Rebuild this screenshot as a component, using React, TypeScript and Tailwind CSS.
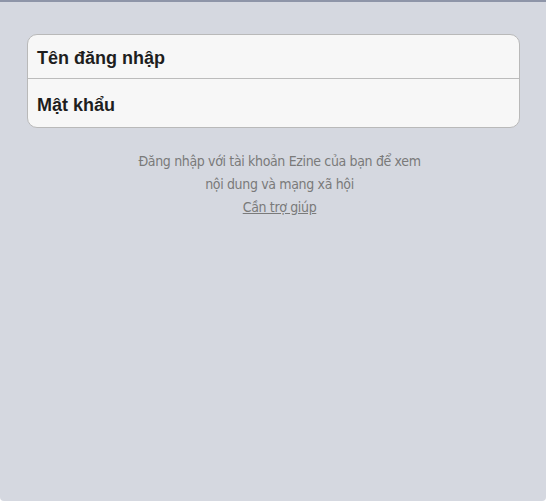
export default function App() {
  return (
    <div className="h-[501px] w-[547px] bg-white">
      <div className="flex h-[501px] w-[546px] flex-col rounded-b-[4px] border-t-2 border-[#8e95a8] bg-[#d5d8e0] pl-[27px] pr-[26px] pt-[32px]">
        <div className="overflow-hidden rounded-[10px] border border-[#b9b9b9] bg-[#f7f7f7] font-['Liberation_Sans',Arial,sans-serif] text-[18px] font-bold text-[#1e1e1e]">
          <div className="flex h-[44px] items-center border-b border-[#bcbcbc] px-[9px] pt-[3px]">Tên đăng nhập</div>
          <div className="flex h-[48px] items-center px-[9px] pt-[4px]">Mật khẩu</div>
        </div>
        <div className="mt-[22px] pl-[12px] text-center font-['DejaVu_Sans_Condensed',sans-serif] text-[14px] leading-[23px] tracking-[-0.35px] text-[#7a7a7a]">
          <p>Đăng nhập với tài khoản Ezine của bạn để xem</p>
          <p>nội dung và mạng xã hội</p>
          <a href="#" className="underline">Cần trợ giúp</a>
        </div>
      </div>
    </div>
  );
}
